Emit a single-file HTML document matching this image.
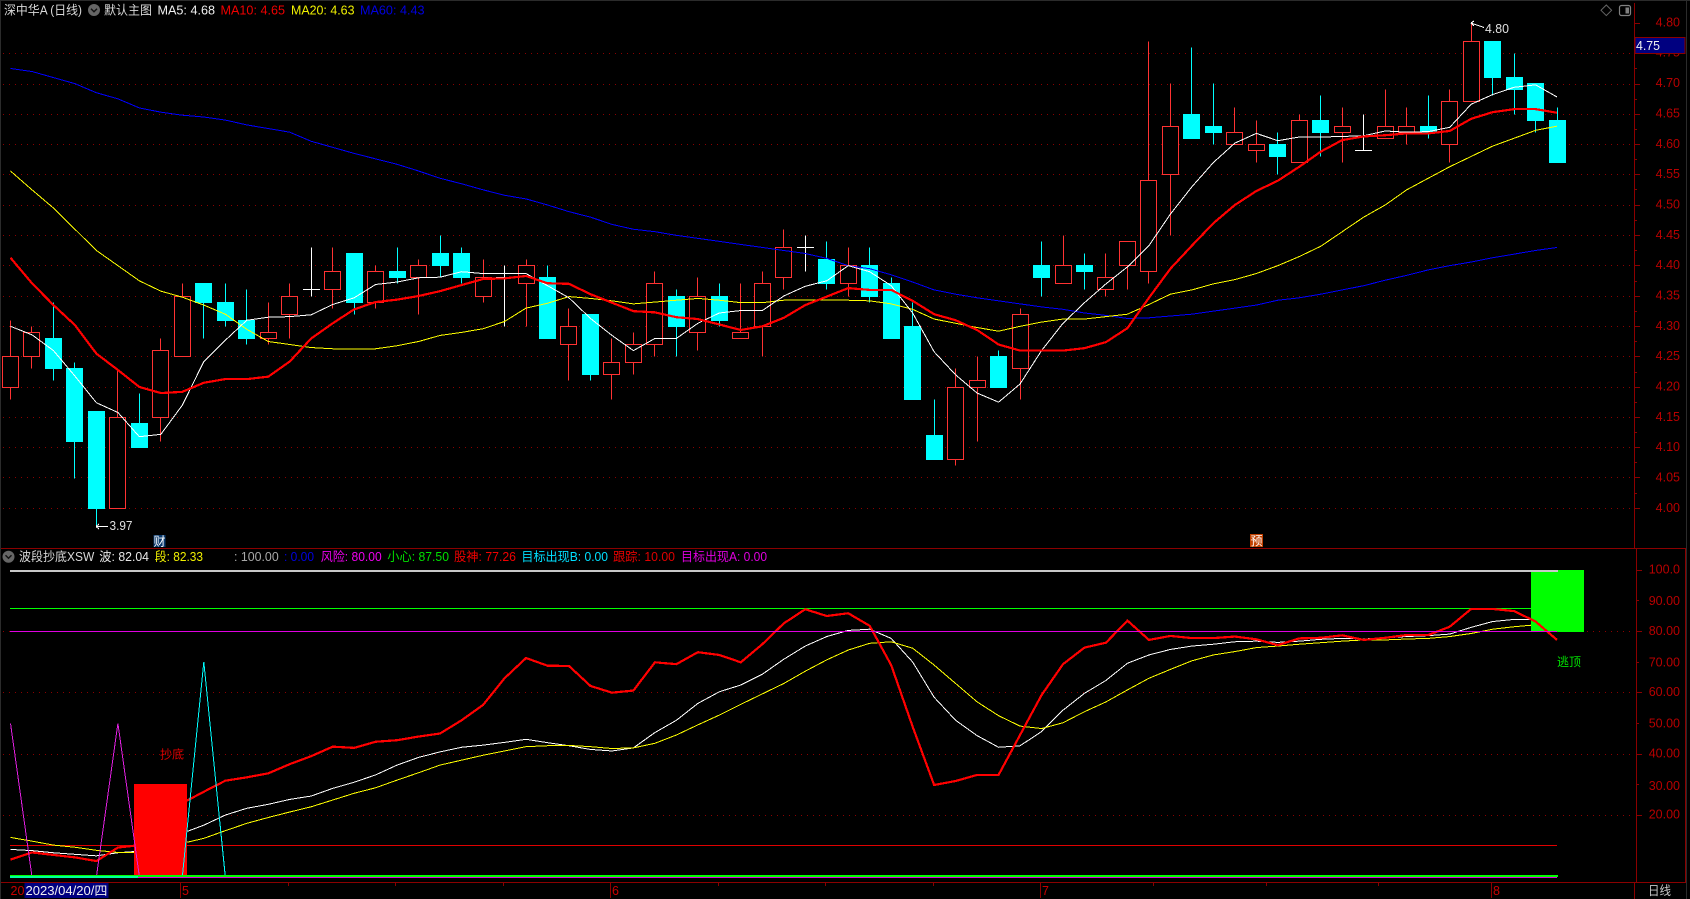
<!DOCTYPE html>
<html lang="zh">
<head>
<meta charset="utf-8">
<title>深中华A (日线)</title>
<style>
html,body{margin:0;padding:0;background:#000;width:1690px;height:899px;overflow:hidden}
svg{position:absolute;left:0;top:0;display:block}
text{font-family:"Liberation Sans","Noto Sans CJK SC",sans-serif;font-size:12.5px}
.c{shape-rendering:crispEdges}
.c *{vector-effect:non-scaling-stroke;fill:none}
.k{shape-rendering:crispEdges;fill:none}
.ax text{fill:#b80000;text-anchor:end}
</style>
</head>
<body>
<svg width="1690" height="899" viewBox="0 0 1690 899" xmlns="http://www.w3.org/2000/svg">
<rect width="1690" height="899" fill="#000"/>
<!-- frame -->
<path class="k" d="M0 .5H1690M.5 0V899M1686.5 0V899" stroke="#2b2b2b"/>
<!-- upper grid -->
<path class="k" stroke="#8b0000" stroke-dasharray="1 5" d="M3 53.5H1634M3 84.5H1634M3 114.5H1634M3 144.5H1634M3 174.5H1634M3 205.5H1634M3 235.5H1634M3 265.5H1634M3 296.5H1634M3 326.5H1634M3 356.5H1634M3 387.5H1634M3 417.5H1634M3 447.5H1634M3 477.5H1634M3 508.5H1634"/>

<!-- candles in raw pixels -->
<path class="k" stroke="#00ffff" d="M53.5 302.5V380.5M74.5 362.5V478.5M96.5 411.5V526.5M139.5 393.5V423.5M203.5 283.5V338.5M225.5 283.5V326.5M246.5 289.5V344.5M354.5 253.5V314.5M397.5 247.5V283.5M440.5 235.5V277.5M461.5 247.5V283.5M547.5 265.5V338.5M590.5 314.5V380.5M676.5 289.5V356.5M719.5 283.5V326.5M826.5 241.5V289.5M869.5 247.5V302.5M891.5 277.5V338.5M912.5 302.5V399.5M934.5 399.5V459.5M998.5 350.5V387.5M1041.5 241.5V296.5M1084.5 253.5V289.5M1191.5 47.5V138.5M1213.5 83.5V144.5M1277.5 132.5V174.5M1320.5 95.5V156.5M1428.5 95.5V138.5M1492.5 41.5V95.5M1514.5 53.5V114.5M1535.5 83.5V132.5M1557.5 107.5V162.5"/>
<path class="k" stroke="#00ffff" stroke-width="17" d="M53.5 338V369M74.5 368V442M96.5 411V509M139.5 423V448M203.5 283V303M225.5 302V321M246.5 320V339M354.5 253V303M397.5 271V278M440.5 253V266M461.5 253V278M547.5 277V339M590.5 314V375M676.5 296V327M719.5 296V321M826.5 259V284M869.5 265V297M891.5 283V339M912.5 326V400M934.5 435V460M998.5 356V388M1041.5 265V278M1084.5 265V272M1191.5 114V139M1213.5 126V133M1277.5 144V157M1320.5 120V133M1428.5 126V133M1492.5 41V78M1514.5 77V90M1535.5 83V121M1557.5 120V163"/>
<path class="k" stroke="#ff3232" d="M10.5 320.5V399.5M31.5 326.5V368.5M117.5 368.5V508.5M160.5 338.5V441.5M182.5 283.5V356.5M268.5 302.5V344.5M289.5 283.5V338.5M332.5 247.5V308.5M375.5 265.5V308.5M418.5 259.5V314.5M483.5 259.5V302.5M526.5 259.5V326.5M568.5 308.5V380.5M611.5 338.5V399.5M633.5 332.5V374.5M654.5 271.5V356.5M697.5 277.5V350.5M740.5 283.5V338.5M762.5 271.5V356.5M783.5 229.5V289.5M848.5 247.5V296.5M955.5 368.5V465.5M977.5 356.5V441.5M1020.5 308.5V399.5M1063.5 235.5V283.5M1105.5 253.5V296.5M1127.5 241.5V289.5M1148.5 41.5V283.5M1170.5 83.5V235.5M1234.5 107.5V144.5M1256.5 120.5V162.5M1299.5 114.5V162.5M1342.5 107.5V162.5M1385.5 89.5V138.5M1406.5 107.5V144.5M1449.5 89.5V162.5M1471.5 23.5V101.5"/>
<path style="shape-rendering:crispEdges" fill="#000" stroke="#ff3232" d="M2.5 356.5h16v31h-16zM23.5 332.5h16v24h-16zM109.5 417.5h16v91h-16zM152.5 350.5h16v67h-16zM174.5 296.5h16v60h-16zM260.5 332.5h16v6h-16zM281.5 296.5h16v18h-16zM324.5 271.5h16v18h-16zM367.5 271.5h16v31h-16zM410.5 265.5h16v12h-16zM475.5 277.5h16v19h-16zM518.5 265.5h16v18h-16zM560.5 326.5h16v18h-16zM603.5 362.5h16v12h-16zM625.5 344.5h16v18h-16zM646.5 283.5h16v61h-16zM689.5 296.5h16v36h-16zM732.5 332.5h16v6h-16zM754.5 283.5h16v43h-16zM775.5 247.5h16v30h-16zM840.5 265.5h16v18h-16zM947.5 387.5h16v72h-16zM969.5 380.5h16v7h-16zM1012.5 314.5h16v54h-16zM1055.5 265.5h16v18h-16zM1097.5 277.5h16v12h-16zM1119.5 241.5h16v24h-16zM1140.5 180.5h16v91h-16zM1162.5 126.5h16v48h-16zM1226.5 132.5h16v12h-16zM1248.5 144.5h16v6h-16zM1291.5 120.5h16v42h-16zM1334.5 126.5h16v6h-16zM1377.5 126.5h16v12h-16zM1398.5 126.5h16v6h-16zM1441.5 101.5h16v43h-16zM1463.5 41.5h16v60h-16z"/>
<path class="k" stroke="#fff" d="M311.5 247.5V296.5M303 289.5H320M504.5 265.5V326.5M496 277.5H513M805.5 235.5V271.5M797 247.5H814M1363.5 114.5V150.5M1355 150.5H1372"/>

<g class="c" transform="matrix(21.48 0 0 -606.67 10.5 2935)">
<!-- MA60 -->
<polyline stroke="#0000ff" stroke-width="1" points="0,4.725 1,4.72 2,4.71 3,4.70 4,4.685 5,4.675 6,4.66 7,4.653 8,4.648 9,4.645 10,4.64 11,4.632 12,4.626 13,4.62 14,4.605 15,4.595 16,4.585 17,4.576 18,4.567 19,4.556 20,4.544 21,4.535 22,4.525 23,4.516 24,4.51 25,4.50 26,4.489 27,4.48 28,4.468 29,4.46 30,4.456 31,4.45 32,4.445 33,4.44 34,4.435 35,4.43 36,4.425 37,4.42 38,4.412 39,4.40 40,4.395 41,4.385 42,4.373 43,4.36 44,4.353 45,4.347 46,4.342 47,4.337 48,4.332 49,4.328 50,4.322 51,4.318 52,4.313 53,4.314 54,4.317 55,4.32 56,4.325 57,4.33 58,4.335 59,4.343 60,4.347 61,4.353 62,4.36 63,4.367 64,4.376 65,4.384 66,4.393 67,4.40 68,4.406 69,4.413 70,4.419 71,4.425 72,4.43"/>
<!-- MA20 -->
<polyline stroke="#ffff00" stroke-width="1" points="0,4.556 1,4.525 2,4.495 3,4.46 4,4.425 5,4.40 6,4.375 7,4.358 8,4.348 9,4.335 10,4.32 11,4.295 12,4.275 13,4.27 14,4.265 15,4.263 16,4.263 17,4.263 18,4.268 19,4.275 20,4.285 21,4.29 22,4.296 23,4.308 24,4.33 25,4.338 26,4.349 27,4.346 28,4.342 29,4.337 30,4.34 31,4.343 32,4.346 33,4.343 34,4.339 35,4.339 36,4.343 37,4.343 38,4.343 39,4.343 40,4.342 41,4.337 42,4.328 43,4.312 44,4.305 45,4.298 46,4.292 47,4.30 48,4.307 49,4.312 50,4.312 51,4.316 52,4.32 53,4.336 54,4.353 55,4.36 56,4.37 57,4.377 58,4.387 59,4.40 60,4.415 61,4.432 62,4.456 63,4.48 64,4.50 65,4.525 66,4.544 67,4.563 68,4.58 69,4.597 70,4.61 71,4.623 72,4.63"/>
<!-- MA5 -->
<polyline stroke="#ffffff" stroke-width="1" points="0,4.30 1,4.286 2,4.26 3,4.218 4,4.174 5,4.158 6,4.118 7,4.122 8,4.17 9,4.242 10,4.277 11,4.31 12,4.315 13,4.316 14,4.319 15,4.336 16,4.347 17,4.369 18,4.373 19,4.38 20,4.381 21,4.39 22,4.387 23,4.387 24,4.387 25,4.367 26,4.347 27,4.313 28,4.285 29,4.26 30,4.28 31,4.28 32,4.305 33,4.322 34,4.326 35,4.326 36,4.35 37,4.366 38,4.375 39,4.40 40,4.39 41,4.367 42,4.322 43,4.258 44,4.22 45,4.19 46,4.175 47,4.205 48,4.26 49,4.305 50,4.339 51,4.37 52,4.398 53,4.433 54,4.485 55,4.53 56,4.57 57,4.602 58,4.618 59,4.606 60,4.612 61,4.612 62,4.613 63,4.614 64,4.622 65,4.62 66,4.621 67,4.628 68,4.666 69,4.682 70,4.694 71,4.698 72,4.678"/>
<!-- MA10 -->
<polyline stroke="#ff0000" stroke-width="2.2" points="0,4.413 1,4.371 2,4.335 3,4.302 4,4.255 5,4.228 6,4.20 7,4.19 8,4.192 9,4.207 10,4.213 11,4.213 12,4.217 13,4.242 14,4.28 15,4.305 16,4.328 17,4.34 18,4.344 19,4.35 20,4.358 21,4.368 22,4.378 23,4.379 24,4.383 25,4.371 26,4.37 27,4.353 28,4.339 29,4.325 30,4.323 31,4.315 32,4.312 33,4.303 34,4.294 35,4.30 36,4.314 37,4.335 38,4.349 39,4.363 40,4.36 41,4.36 42,4.342 43,4.32 44,4.31 45,4.294 46,4.27 47,4.26 48,4.26 49,4.26 50,4.264 51,4.274 52,4.297 53,4.347 54,4.395 55,4.433 56,4.47 57,4.50 58,4.523 59,4.54 60,4.563 61,4.588 62,4.607 63,4.613 64,4.615 65,4.618 66,4.618 67,4.622 68,4.642 69,4.653 70,4.658 71,4.658 72,4.652"/>
</g>

<!-- price annotations -->
<path class="k" stroke="#fff" d="M96 526.5H108M96 526.5L99 524M96 526.5L99 529M1471 23L1484 27.5M1471 23L1474 21M1471 23L1474 26"/>
<text x="109.5" y="530" fill="#e0e0e0" textLength="23" lengthAdjust="spacingAndGlyphs">3.97</text>
<text x="1485" y="33" fill="#e0e0e0" textLength="24" lengthAdjust="spacingAndGlyphs">4.80</text>

<!-- event tags -->
<rect x="153.5" y="535" width="12" height="12" fill="#0a3a6e"/>
<text x="153.5" y="545.5" fill="#fff" style="font-size:12px">财</text>
<rect x="1250" y="534" width="13" height="13" fill="#c04000"/>
<text x="1250.5" y="545" fill="#fff" style="font-size:12px">预</text>

<!-- top legend -->
<text x="4" y="14.5" fill="#d8d8d8" textLength="78" lengthAdjust="spacingAndGlyphs">深中华A (日线)</text>
<circle cx="94" cy="10" r="6" fill="#666"/>
<path d="M91 8.7L94 11.7L97 8.7" fill="none" stroke="#111" stroke-width="1.4"/>
<text x="104" y="14.5" fill="#d8d8d8" textLength="48" lengthAdjust="spacingAndGlyphs">默认主图</text>
<text x="157.5" y="14.5" fill="#f0f0f0" textLength="57.5" lengthAdjust="spacingAndGlyphs">MA5: 4.68</text>
<text x="220.5" y="14.5" fill="#f00000" textLength="64.5" lengthAdjust="spacingAndGlyphs">MA10: 4.65</text>
<text x="291" y="14.5" fill="#f0f000" textLength="63.5" lengthAdjust="spacingAndGlyphs">MA20: 4.63</text>
<text x="360" y="14.5" fill="#0000e0" textLength="64.5" lengthAdjust="spacingAndGlyphs">MA60: 4.43</text>

<!-- top-right icons -->
<path d="M1606.3 5L1611.6 10.3L1606.3 15.6L1601 10.3Z" fill="none" stroke="#666"/>
<rect x="1619.5" y="5.5" width="11" height="10" rx="2" fill="none" stroke="#808080" stroke-width="1.2"/>
<rect x="1625.5" y="7.5" width="3.5" height="6" fill="#808080"/>

<!-- separators and axes -->
<path class="k" stroke="#8b0000" d="M1 548.5H1686M1 882.5H1686M1634.5 3V549M1634.5 882V899M1636.5 549V882M1685.5 549V882"/>
<path class="k" stroke="#8b0000" d="M1634 23.5H1640M1634 53.5H1640M1634 84.5H1640M1634 114.5H1640M1634 144.5H1640M1634 174.5H1640M1634 205.5H1640M1634 235.5H1640M1634 265.5H1640M1634 296.5H1640M1634 326.5H1640M1634 356.5H1640M1634 387.5H1640M1634 417.5H1640M1634 447.5H1640M1634 477.5H1640M1634 508.5H1640M1634 38.5H1637M1634 68.5H1637M1634 99.5H1637M1634 129.5H1637M1634 159.5H1637M1634 189.5H1637M1634 220.5H1637M1634 250.5H1637M1634 281.5H1637M1634 311.5H1637M1634 341.5H1637M1634 372.5H1637M1634 402.5H1637M1634 432.5H1637M1634 462.5H1637M1634 493.5H1637"/>
<g class="ax">
<text x="1680" y="26.4">4.80</text>
<text x="1680" y="56.7">4.75</text>
<text x="1680" y="87.1">4.70</text>
<text x="1680" y="117.4">4.65</text>
<text x="1680" y="147.8">4.60</text>
<text x="1680" y="178.1">4.55</text>
<text x="1680" y="208.4">4.50</text>
<text x="1680" y="238.8">4.45</text>
<text x="1680" y="269.1">4.40</text>
<text x="1680" y="299.4">4.35</text>
<text x="1680" y="329.8">4.30</text>
<text x="1680" y="360.1">4.25</text>
<text x="1680" y="390.4">4.20</text>
<text x="1680" y="420.8">4.15</text>
<text x="1680" y="451.1">4.10</text>
<text x="1680" y="481.4">4.05</text>
<text x="1680" y="511.8">4.00</text>
</g>
<!-- current price box -->
<rect x="1635" y="37.5" width="50" height="16" fill="#000080" stroke="#8b0000"/>
<text x="1636" y="50" fill="#f0f0f0" textLength="24" lengthAdjust="spacingAndGlyphs">4.75</text>

<!-- lower legend -->
<circle cx="8.5" cy="556.7" r="6" fill="#666"/>
<path d="M5.5 555.3L8.5 558.3L11.5 555.3" fill="none" stroke="#111" stroke-width="1.4"/>
<text x="19" y="561" fill="#d8d8d8" textLength="75.3" lengthAdjust="spacingAndGlyphs">波段抄底XSW</text>
<text x="99.3" y="561" fill="#e8e8e8" textLength="49.7" lengthAdjust="spacingAndGlyphs">波: 82.04</text>
<text x="154.7" y="561" fill="#f0f000" textLength="48.3" lengthAdjust="spacingAndGlyphs">段: 82.33</text>
<text x="234" y="561" fill="#a8a8a8" textLength="44.7" lengthAdjust="spacingAndGlyphs">: 100.00</text>
<text x="284" y="561" fill="#0000e0" textLength="30" lengthAdjust="spacingAndGlyphs">: 0.00</text>
<text x="320.7" y="561" fill="#f000f0" textLength="61" lengthAdjust="spacingAndGlyphs">风险: 80.00</text>
<text x="387.3" y="561" fill="#00e000" textLength="61.7" lengthAdjust="spacingAndGlyphs">小心: 87.50</text>
<text x="454" y="561" fill="#f00000" textLength="62" lengthAdjust="spacingAndGlyphs">股神: 77.26</text>
<text x="521.4" y="561" fill="#00e0ff" textLength="86.6" lengthAdjust="spacingAndGlyphs">目标出现B: 0.00</text>
<text x="613" y="561" fill="#e00000" textLength="62" lengthAdjust="spacingAndGlyphs">跟踪: 10.00</text>
<text x="681" y="561" fill="#e000e0" textLength="86" lengthAdjust="spacingAndGlyphs">目标出现A: 0.00</text>

<!-- lower grid -->
<path class="k" stroke="#8b0000" stroke-dasharray="1 5" d="M3 631.5H1634M3 692.5H1634M3 754.5H1634M3 815.5H1634"/>
<!-- lower axis -->
<path class="k" stroke="#8b0000" d="M1636 570.5H1642M1636 600.5H1639M1636 631.5H1642M1636 662.5H1639M1636 692.5H1642M1636 723.5H1639M1636 754.5H1642M1636 784.5H1639M1636 815.5H1642"/>
<g class="ax">
<text x="1680" y="573.5">100.0</text>
<text x="1680" y="605">90.00</text>
<text x="1680" y="635">80.00</text>
<text x="1680" y="666.5">70.00</text>
<text x="1680" y="696">60.00</text>
<text x="1680" y="727.5">50.00</text>
<text x="1680" y="757.5">40.00</text>
<text x="1680" y="790">30.00</text>
<text x="1680" y="818.5">20.00</text>
</g>

<!-- indicator lines -->
<path class="k" stroke="#00ff00" d="M10 608.5H1531"/>
<path class="k" stroke="#e00000" d="M10 845.5H1557"/>
<g class="c" transform="matrix(21.48 0 0 -3.067 10.5 876.7)">
<polyline stroke="#ffffff" stroke-width="1" points="0,8.9 1,8.5 2,7.8 3,7.3 4,6.8 5,7.8 5.75,8.2 8.2,14.7 9,16.8 10,20.1 11,22.3 12,23.6 13,25.2 14,26.3 15,28.8 16,30.8 17,33.2 18,36.4 19,38.9 20,40.7 21,42.2 22,42.9 23,43.8 24,44.8 25,43.7 26,42.7 27,41.5 28,41 29,42 30,47 31,51 32,56.5 33,60.3 34,62.5 35,66 36,70.9 37,75.2 38,78.3 39,80.3 40,80.7 41,77.7 42,70 43,58.5 44,51 45,46 46,42.2 47,42.7 48,47.3 49,54.3 50,59.8 51,64 52,69.6 53,72.3 54,74.1 55,75.2 56,75.8 57,76.6 58,76.8 59,76.4 60,76.8 61,77.4 62,77.7 63,77.5 64,77.9 65,78.3 66,78.6 67,79.1 68,81.3 69,83.2 70,83.9 70.8,83.9"/>
<polyline stroke="#ffff00" stroke-width="1" points="0,12.8 1,11.6 2,10.3 3,9.6 4,8.6 5,7.9 5.75,7.9 8.2,11.2 9,12.5 10,15 11,17.4 12,19.3 13,21.1 14,22.8 15,25 16,27.2 17,29 18,31.5 19,33.9 20,36.4 21,38 22,39.6 23,41 24,42.4 25,42.7 26,42.8 27,42.4 28,41.8 29,42 30,43.5 31,46.2 32,49.5 33,52.7 34,56.2 35,59.6 36,63 37,67 38,70.7 39,73.9 40,76.1 41,76.6 42,74.5 43,69 44,63 45,57 46,52.5 47,49.1 48,48.3 49,50.2 50,53.8 51,57 52,60.9 53,64.7 54,67.6 55,70.4 56,72.3 57,73.4 58,74.7 59,75.2 60,75.8 61,76.3 62,76.8 63,77.2 64,77.2 65,77.5 66,77.7 67,78.3 68,79.3 69,80.7 70,81.5 70.8,82"/>
</g>
<!-- green block -->
<rect x="1531" y="570" width="53" height="62" fill="#00ff00"/>
<g class="c" transform="matrix(21.48 0 0 -3.067 10.5 876.7)">
<polyline stroke="#ff0000" stroke-width="2.2" points="0,5.6 1,7.9 2,7.1 3,6.3 4,5.1 5,9.5 6,10.3 7,15 8,24 9,27.7 10,31.3 11,32.4 12,33.7 13,36.7 14,39.3 15,42.4 16,42 17,44 18,44.5 19,45.7 20,46.7 21,51 22,56 23,64.7 24,71.3 25,68.8 26,68.7 27,62.2 28,60 29,60.7 30,69.9 31,69.3 32,73.2 33,72.3 34,69.9 35,75.8 36,82.6 37,87.2 38,85 39,85.9 40,81.8 41,69 42,48.9 43,29.9 44,31.2 45,33.2 46,33.2 47,46.2 48,59.2 49,69.3 50,74.7 51,76.3 52,83.5 53,77.2 54,78.5 55,77.8 56,77.8 57,78.3 58,77.4 59,75.5 60,77.7 61,77.9 62,78.7 63,77.2 64,77.9 65,78.8 66,78.8 67,81.5 68,87.3 69,87.3 70,86.6 71,83.2 72,77.2"/>
</g>
<!-- red block -->
<rect x="134" y="784" width="53" height="92" fill="#ff0000"/>
<!-- flat lines drawn over blocks -->
<path class="k" stroke="#e000e0" d="M10 631.5H1557"/>
<path class="k" stroke="#c8c8c8" stroke-width="2" d="M10 571H1558"/>
<g class="c" transform="matrix(21.48 0 0 -3.067 10.5 876.7)">
<polyline stroke="#e020e0" stroke-width="1" points="0,50 1,0 4,0 5,50 6,0"/>
<polyline stroke="#00ffff" stroke-width="1" points="8,0 9,70 10,0"/>
</g>
<path class="k" stroke="#00ff00" stroke-width="2" d="M10 876H1558"/>
<path class="k" stroke="#e000e0" d="M10 877.5H1557"/>
<path class="k" stroke="#00ffa0" stroke-width="2" d="M10 877H138"/>
<text x="160" y="758.5" fill="#e00000" textLength="24" lengthAdjust="spacingAndGlyphs" style="font-size:12px">抄底</text>
<text x="1557" y="666" fill="#00e000" textLength="24" lengthAdjust="spacingAndGlyphs" style="font-size:12px">逃顶</text>

<!-- date axis -->
<path class="k" stroke="#8b0000" d="M180.5 883V898M610.5 883V898M1040.5 883V898M1491.5 883V898M288.5 883V886M395.5 883V886M503.5 883V886M718.5 883V886M825.5 883V886M933.5 883V886M1153.5 883V886M1266.5 883V886M1378.5 883V886"/>
<text x="10.5" y="895" fill="#c80000">20</text>
<rect x="24.5" y="883" width="84" height="15" fill="#000080"/>
<text x="25.5" y="895" fill="#f0f0f0" textLength="82" lengthAdjust="spacingAndGlyphs">2023/04/20/四</text>
<text x="182" y="895" fill="#c80000">5</text>
<text x="612" y="895" fill="#c80000">6</text>
<text x="1042" y="895" fill="#c80000">7</text>
<text x="1493" y="895" fill="#c80000">8</text>
<text x="1648" y="895" fill="#c8c8c8" textLength="23" lengthAdjust="spacingAndGlyphs">日线</text>
</svg>
</body>
</html>
